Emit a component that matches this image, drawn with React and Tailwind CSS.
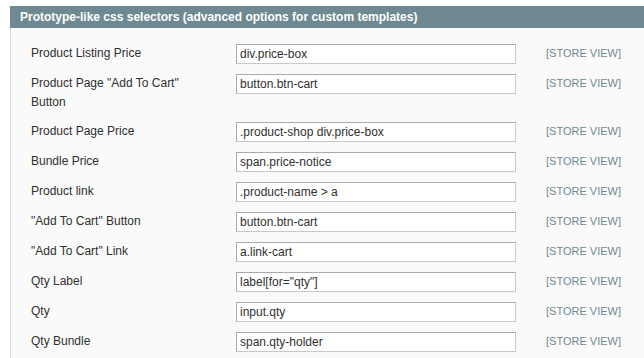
import React from "react";

const rows = [
  { label: "Product Listing Price", value: "div.price-box" },
  { label: 'Product Page "Add To Cart" Button', value: "button.btn-cart" },
  { label: "Product Page Price", value: ".product-shop div.price-box" },
  { label: "Bundle Price", value: "span.price-notice" },
  { label: "Product link", value: ".product-name > a" },
  { label: '"Add To Cart" Button', value: "button.btn-cart" },
  { label: '"Add To Cart" Link', value: "a.link-cart" },
  { label: "Qty Label", value: 'label[for="qty"]' },
  { label: "Qty", value: "input.qty" },
  { label: "Qty Bundle", value: "span.qty-holder" },
];

const App = () => {
  return (
    <div className="min-h-[358px] bg-white pt-[6px] pl-[10px] font-['Liberation_Sans',Arial,sans-serif] text-[12px] text-[#2f2f2f]">
      <div className="bg-[#6f8992] px-[10px] py-[2px]">
        <h4 className="text-[12px] leading-[18px] font-bold text-white">
          Prototype-like css selectors (advanced options for custom templates)
        </h4>
      </div>

      <div className="border-l border-[#d6d6d6] bg-[#fafafa] pl-[20px] pt-[16px] pb-[10px]">
        <div className="flex flex-col gap-[10px]">
          {rows.map((row, i) => (
            <div key={i} className="flex items-start">
              <div className="w-[205px] shrink-0">
                <label className="block w-[185px] leading-[19px]">{row.label}</label>
              </div>
              <input
                readOnly
                value={row.value}
                className="h-[20px] w-[280px] shrink-0 border border-[#aaa] border-r-[#c8c8c8] border-b-[#c8c8c8] bg-white px-[3px] text-[12px] leading-[18px] text-[#2f2f2f] outline-none"
              />
              <span className="ml-[30px] text-[11px] leading-[19px] text-[#6f8992]">[STORE VIEW]</span>
            </div>
          ))}
        </div>
      </div>
    </div>
  );
};

export default App;
